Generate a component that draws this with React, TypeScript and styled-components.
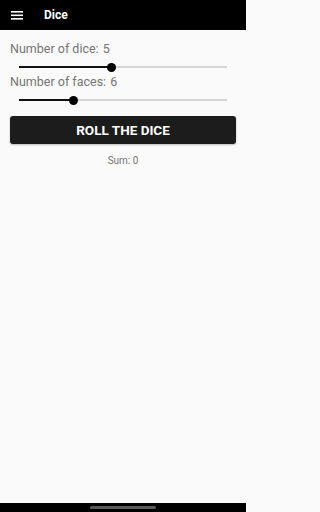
import React from "react";
import styled, { createGlobalStyle } from "styled-components";

const Global = createGlobalStyle`
  html, body { margin: 0; padding: 0; background: #fafafa; }
  * { box-sizing: border-box; }
`;

const Screen = styled.div`
  width: 246px;
  height: 512px;
  display: flex;
  flex-direction: column;
  background: #fafafa;
  font-family: Roboto, "Noto Sans", sans-serif;
`;

const Header = styled.header`
  height: 30px;
  background: #000;
  display: flex;
  align-items: center;
  padding-left: 11px;
  gap: 21px;
`;

const Title = styled.h1`
  margin: 0;
  color: #fff;
  font-size: 12px;
  font-weight: 700;
  line-height: 14px;
`;

const Content = styled.main`
  flex: 1;
  display: flex;
  flex-direction: column;
  padding: 11px 10px 0 10px;
`;

const Label = styled.div`
  color: #757575;
  font-size: 12.5px;
  line-height: 15px;
  display: flex;
  gap: 4px;
`;

const SliderRow = styled.div`
  position: relative;
  height: 14px;
  margin: 4px 9px 0 9px;
  display: flex;
  align-items: center;
`;

const Track = styled.div`
  position: relative;
  width: 100%;
  height: 2px;
  background: #d6d6d6;
`;

const Fill = styled.div`
  position: absolute;
  left: 0;
  top: 0;
  height: 2px;
  background: #111;
`;

const Thumb = styled.div`
  position: absolute;
  top: 50%;
  width: 9px;
  height: 9px;
  margin-left: -4.5px;
  margin-top: -4.5px;
  border-radius: 50%;
  background: #000;
`;

const Button = styled.button`
  margin-top: 9px;
  height: 28px;
  width: 100%;
  border: none;
  border-radius: 3px;
  background: #1c1c1c;
  color: #fff;
  font-family: Roboto, "Noto Sans", sans-serif;
  font-size: 13.5px;
  font-weight: 700;
  letter-spacing: 0;
  box-shadow: 0 1px 2px rgba(0, 0, 0, 0.25);
  padding: 0;
`;

const Sum = styled.div`
  margin-top: 11px;
  text-align: center;
  color: #757575;
  font-size: 10px;
  line-height: 12px;
`;

const NavBar = styled.div`
  height: 9px;
  background: #000;
  display: flex;
  justify-content: center;
  align-items: center;
`;

const Pill = styled.div`
  width: 66px;
  height: 2.5px;
  border-radius: 2px;
  background: #5a5a5a;
`;

function MenuIcon() {
  return (
    <svg width="12" height="9" viewBox="0 0 12 9">
      <rect x="0" y="0" width="12" height="1.6" fill="#fff" />
      <rect x="0" y="3.5" width="12" height="1.6" fill="#fff" />
      <rect x="0" y="7" width="12" height="1.6" fill="#fff" />
    </svg>
  );
}

function Slider({ value, min, max }: { value: number; min: number; max: number }) {
  const pct = ((value - min) / (max - min)) * 100;
  return (
    <SliderRow>
      <Track>
        <Fill style={{ width: `${pct}%` }} />
        <Thumb style={{ left: `${pct}%` }} />
      </Track>
    </SliderRow>
  );
}

export default function App() {
  return (
    <>
      <Global />
      <Screen>
        <Header>
          <MenuIcon />
          <Title>Dice</Title>
        </Header>
        <Content>
          <Label>
            <span>Number of dice:</span>
            <span>5</span>
          </Label>
          <Slider value={5} min={1} max={10} />
          <Label>
            <span>Number of faces:</span>
            <span>6</span>
          </Label>
          <Slider value={6} min={1} max={20} />
          <Button>ROLL THE DICE</Button>
          <Sum>Sum: 0</Sum>
        </Content>
        <NavBar>
          <Pill />
        </NavBar>
      </Screen>
    </>
  );
}
